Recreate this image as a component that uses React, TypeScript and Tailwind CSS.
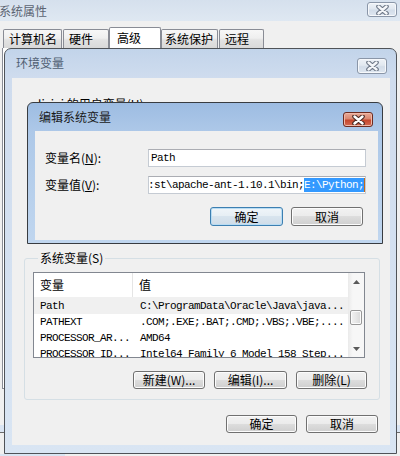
import type { ReactNode } from "react";

const mono = "font-['Liberation_Mono',monospace] text-[11px] tracking-[-0.6px]";

function CloseGlyph({ red }: { red?: boolean }) {
  const d = "M2.5 1.5 L10.5 8.5 M10.5 1.5 L2.5 8.5";
  return (
    <svg width="13" height="10" viewBox="0 0 13 10">
      <path d={d} stroke={red ? "#4a2a24" : "#6c7686"} strokeWidth="4.6" strokeLinecap="round" />
      <path d={d} stroke={red ? "#ffffff" : "#f4f6f9"} strokeWidth="2.4" strokeLinecap="round" />
    </svg>
  );
}

function CloseButton({ red, className }: { red?: boolean; className: string }) {
  return (
    <div
      className={`flex items-center justify-center rounded-[3px] border ${
        red
          ? "border-[#6d2b20] bg-[linear-gradient(#e9aa98_0%,#d98770_45%,#c5462c_55%,#d46a52_100%)] shadow-[inset_0_0_0_1px_#efb8a8]"
          : "border-[#8a96a8] bg-[linear-gradient(#eef2f7_0%,#e1e8f0_45%,#d3dde9_55%,#dfe7f1_100%)] shadow-[inset_0_0_0_1px_#f6f8fb]"
      } ${className}`}
    >
      <CloseGlyph red={red} />
    </div>
  );
}

function Btn({ children, className, focus }: { children: ReactNode; className: string; focus?: boolean }) {
  return (
    <div
      className={`flex items-center justify-center rounded-[3px] border text-[12px] leading-none text-black ${
        focus
          ? "border-[#3c7fb1] bg-[linear-gradient(#f0f5f9_0%,#e6eef4_49%,#d8e4ee_50%,#cfdce8_100%)] shadow-[inset_0_0_0_1px_#b8dcf3]"
          : "border-[#707070] bg-[linear-gradient(#f2f2f2_0%,#ebebeb_49%,#dddddd_50%,#cfcfcf_100%)] shadow-[inset_0_0_0_1px_#fcfcfc]"
      } ${className}`}
    >
      {children}
    </div>
  );
}

function Tab({ label, className, active }: { label: string; className: string; active?: boolean }) {
  return (
    <div
      className={`flex items-center border border-b-0 border-[#898c95] rounded-t-[2px] text-[12px] leading-none ${
        active ? "h-[21px] bg-white" : "h-[19px] bg-[linear-gradient(#f7f7f7_0%,#efefef_45%,#e2e2e2_55%,#d9d9d9_100%)]"
      } ${className}`}
    >
      {label}
    </div>
  );
}

const rows = [
  { name: "Path", value: "C:\\ProgramData\\Oracle\\Java\\java...", sel: true },
  { name: "PATHEXT", value: ".COM;.EXE;.BAT;.CMD;.VBS;.VBE;...." },
  { name: "PROCESSOR_AR...", value: "AMD64" },
  { name: "PROCESSOR_ID...", value: "Intel64 Family 6 Model 158 Step..." },
];

function SysList() {
  return (
    <div className="mt-[7px] mr-[2px] h-[86px] flex border border-[#828790] bg-white overflow-hidden">
      <div className="flex-1 flex flex-col min-w-0">
        <div className="h-[25px] shrink-0 flex text-[12px] border-b border-[#f0f0f0]">
          <div className="w-[99px] flex items-center pl-[6px] border-r border-[#e5e5e5]">变量</div>
          <div className="flex items-center pl-[6px]">值</div>
        </div>
        {rows.map((r) => (
          <div key={r.name} className={`h-[16px] shrink-0 flex items-center whitespace-nowrap ${mono} ${r.sel ? "bg-[#f0f0f0]" : ""}`}>
            <div className="w-[100px] pl-[6px] overflow-hidden">{r.name}</div>
            <div className="pl-[6px]">{r.value}</div>
          </div>
        ))}
      </div>
      <div className="w-[16px] shrink-0 flex flex-col bg-[linear-gradient(90deg,#eaeaea,#f7f7f7_30%,#f7f7f7)]">
        <div className="h-[18px] flex items-center justify-center">
          <svg width="7" height="4" viewBox="0 0 7 4"><path d="M0 4 L3.5 0 L7 4 Z" fill="#5a5a5a" /></svg>
        </div>
        <div className="flex-1">
          <div className="mt-[19px] ml-[2px] mr-[2px] h-[15px] rounded-[2px] border border-[#979797] bg-[linear-gradient(90deg,#f2f2f2,#e6e6e6_50%,#d8d8d8)] shadow-[inset_0_0_0_1px_#fbfbfb]" />
        </div>
        <div className="h-[17px] flex items-center justify-center">
          <svg width="7" height="4" viewBox="0 0 7 4"><path d="M0 0 L7 0 L3.5 4 Z" fill="#5a5a5a" /></svg>
        </div>
      </div>
    </div>
  );
}

function EnvWindow() {
  return (
    <div className="absolute left-[4px] top-[48px] w-[393px] h-[406px] flex flex-col rounded-t-[7px] border border-[#4f5358] bg-[linear-gradient(#c2d4ea_0px,#cfdcee_29px,#d9e5f3_100%)]">
      <div className="h-[29px] shrink-0 flex items-start">
        <span className="ml-[11px] mt-[7px] text-[12px] leading-[14px] text-[#4f5e72]">环境变量</span>
        <CloseButton className="ml-auto mr-[9px] mt-[9px] w-[30px] h-[16px]" />
      </div>
      <div className="ml-[7px] mr-[6px] h-[367px] shrink-0 flex flex-col bg-[#f0f0f0] text-black">
        <div className="h-[173px] shrink-0 pl-[26px] pt-[19px]">
          <div className="text-[12px] leading-[14px]">lixiai 的用户变量(U)</div>
        </div>
        <fieldset className="ml-[12px] mr-[10px] pl-[8px] pr-[12px] pb-[10px] rounded-[3px] border border-[#d5dfe5] flex flex-col">
          <legend className="ml-[5px] px-[2px] text-[12px] leading-[14px]">系统变量(S)</legend>
          <SysList />
          <div className="mt-[13px] flex justify-end gap-[9px]">
            <Btn className="w-[72px] h-[18px]">新建(W)...</Btn>
            <Btn className="w-[73px] h-[18px]">编辑(I)...</Btn>
            <Btn className="w-[71px] h-[18px]">删除(L)</Btn>
          </div>
        </fieldset>
        <div className="mt-[15px] pr-[12px] flex justify-end gap-[9px]">
          <Btn className="w-[71px] h-[18px]">确定</Btn>
          <Btn className="w-[72px] h-[18px]">取消</Btn>
        </div>
      </div>
    </div>
  );
}

function EditDialog() {
  const input = "flex-1 h-[18px] flex items-center overflow-hidden whitespace-nowrap bg-white border border-[#c5cbd3] border-t-[#abadb3]";
  return (
    <div className="absolute left-[27px] top-[102px] w-[356px] h-[142px] flex flex-col rounded-t-[6px] border border-[#383c41] bg-[linear-gradient(#9dbce2_0px,#adc8e8_28px,#c0d6ef_100%)]">
      <div className="h-[28px] shrink-0 flex items-start">
        <span className="ml-[11px] mt-[7px] text-[12px] leading-[14px] text-[#1a1a1a]">编辑系统变量</span>
        <CloseButton red className="ml-auto mr-[9px] mt-[9px] w-[30px] h-[15px]" />
      </div>
      <div className="ml-[7px] mr-[4px] h-[109px] shrink-0 flex flex-col bg-[#f0f0f0] pt-[18px] pl-[10px] pr-[12px] text-black">
        <div className="h-[18px] flex items-center">
          <span className="w-[103px] text-[12px]">变量名(<span className="underline">N</span>):</span>
          <div className={`${input} pl-[2px]`}>
            <span className={mono}>Path</span>
          </div>
        </div>
        <div className="mt-[9px] h-[18px] flex items-center">
          <span className="w-[103px] text-[12px]">变量值(<span className="underline">V</span>):</span>
          <div className={`${input} justify-end`}>
            <span className={`${mono} leading-[14px] flex items-center`}>
              <span>:st\apache-ant-1.10.1\bin;</span>
              <span className="bg-[#3399ff] text-white">E:\Python;</span>
              <span className="inline-block w-[1px] h-[14px] bg-[#c46a1a]" />
            </span>
          </div>
        </div>
        <div className="mt-[13px] mr-[3px] flex justify-end gap-[8px]">
          <Btn focus className="w-[73px] h-[19px]">确定</Btn>
          <Btn className="w-[72px] h-[19px]">取消</Btn>
        </div>
      </div>
    </div>
  );
}

export default function App() {
  return (
    <div className="relative w-[400px] h-[456px] overflow-hidden bg-[#f0f0f0] text-black font-['Noto_Sans_CJK_SC','Liberation_Sans',sans-serif]">
      {/* 系统属性 window behind */}
      <div className="h-[21px] flex items-start bg-[linear-gradient(#d5e0ed,#dfe8f2)]">
        <span className="ml-[-1px] mt-[4px] text-[12px] leading-[14px] text-[#5b6472]">系统属性</span>
        <CloseButton className="ml-auto mr-[3px] mt-[2px] w-[30px] h-[15px]" />
      </div>
      <div className="h-[27px] flex items-end pl-[3px]">
        <Tab label="计算机名" className="w-[59px] pl-[5px]" />
        <Tab label="硬件" className="ml-[1px] w-[46px] pl-[5px]" />
        <Tab label="高级" active className="w-[52px] pl-[7px]" />
        <Tab label="系统保护" className="w-[57px] pl-[3px]" />
        <Tab label="远程" className="ml-[1px] w-[45px] pl-[5px]" />
      </div>
      <div className="ml-[2px] w-[360px] h-[341px] border border-t-0 border-[#898c95] bg-white" />
      <div className="h-[36px]" />
      <div className="h-[7px] bg-[#dae5f3]" />
      <div className="h-[1px] bg-[#6b6b6b]" />
      <div className="h-[21px]" />
      <div className="w-[65px] h-[3px] bg-[#dae5f3]" />

      <EnvWindow />
      <EditDialog />
    </div>
  );
}
